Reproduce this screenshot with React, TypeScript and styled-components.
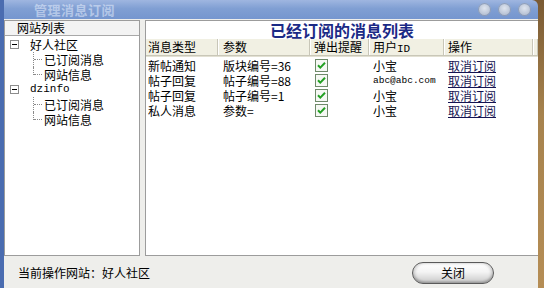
import React from "react";
import styled, { createGlobalStyle } from "styled-components";

const Global = createGlobalStyle`
  html, body { margin: 0; padding: 0; }
  body {
    width: 544px; height: 288px; overflow: hidden;
    background: linear-gradient(180deg, #7a5a33 0%, #a7834e 40%, #b58d55 100%);
    font-family: "Noto Sans CJK SC", "Noto Sans", sans-serif;
    font-size: 12px; color: #000;
  }
`;

const Window = styled.div`
  width: 538px; height: 288px;
  display: flex; flex-direction: column;
  overflow: hidden;
`;

const TitleBar = styled.div`
  height: 19px; flex: none;
  display: flex; align-items: center; justify-content: space-between;
  padding: 0 7px 0 34px;
  background: linear-gradient(180deg, #9fb6e0 0%, #809fd3 45%, #7596cf 100%);
  border-top-right-radius: 6px;
  border-left: 4px solid #4a6cb0;
  box-sizing: border-box;
`;

const TitleText = styled.span`
  font-weight: bold; font-size: 13px; letter-spacing: 0.5px;
  color: rgba(230, 238, 252, 0.55);
  margin-left: -4px;
`;

const TitleButtons = styled.div`
  display: flex; gap: 7px; align-items: center;
`;

const TitleButton = styled.span`
  width: 13px; height: 13px; border-radius: 50%;
  background: radial-gradient(circle at 50% 40%, #dfe5ef 0%, #b9c4d6 60%, #97a7c1 100%);
  box-shadow: inset 0 0 0 1px rgba(110, 130, 165, 0.6);
`;

const Body = styled.div`
  flex: 1; display: flex; flex-direction: column;
  background: #eeeeeb;
  border-left: 4px solid #4a6cb0;
`;

const Main = styled.div`
  display: flex; gap: 5px;
  padding-top: 1px;
  height: 236px;
`;

const LeftPanel = styled.div`
  width: 136px; box-sizing: border-box;
  background: #fff;
  border: 1px solid #9c9c9c;
  display: flex; flex-direction: column;
`;

const PanelHeader = styled.div`
  height: 14px; line-height: 14px;
  padding-left: 12px;
  background: #f3f3f3;
  border-bottom: 1px solid #a8a8a8;
`;

const Tree = styled.div`
  display: flex; flex-direction: column;
  padding-top: 1px;
`;

const TreeRow = styled.div<{ $indent?: number }>`
  height: 15px; line-height: 15px;
  display: flex; align-items: center;
  padding-left: ${(p) => p.$indent ?? 5}px;
  white-space: nowrap;
`;

const Toggle = styled.span`
  width: 9px; height: 9px; box-sizing: border-box;
  border: 1px solid #8c8c8c;
  background: #fff;
  display: inline-flex; align-items: center; justify-content: center;
  margin-right: 11px;
  &::after { content: ""; width: 5px; height: 1px; background: #000; }
`;

const Elbow = styled.span<{ $last?: boolean }>`
  position: relative;
  width: 10px; height: 15px; flex: none;
  margin-right: 1px;
  &::before {
    content: ""; position: absolute; left: 0; top: 0;
    height: ${(p) => (p.$last ? "8px" : "15px")};
    border-left: 1px dotted #8a8a8a;
  }
  &::after {
    content: ""; position: absolute; left: 1px; top: 7px;
    width: 8px; border-top: 1px dotted #8a8a8a;
  }
`;

const MonoText = styled.span`
  font-family: "Liberation Mono", "Noto Sans CJK SC", monospace;
  font-size: 11px;
`;

const RightPanel = styled.div`
  flex: 1; box-sizing: border-box;
  background: #fff;
  border: 1px solid #9c9c9c;
  border-right: none;
  display: flex; flex-direction: column;
`;

const Heading = styled.div`
  height: 18px; line-height: 18px;
  text-align: center;
  font-size: 16px; font-weight: bold;
  color: #1b2a86;
`;

const Table = styled.div`
  display: flex; flex-direction: column;
`;

const HeaderRow = styled.div`
  display: grid;
  grid-template-columns: 72px 92px 59px 75px 89px 1fr;
  height: 16px;
  background: #f1f0e3;
  border-bottom: 1px solid #c9c7b8;
  box-shadow: 0 1px 0 #e2e0d2;
  margin-bottom: 2px;
`;

const HeadCell = styled.div<{ $pad?: number }>`
  line-height: 16px;
  padding-left: ${(p) => p.$pad ?? 4}px;
  border-right: 1px solid #c8c6b8;
  box-shadow: 1px 0 0 #ffffff;
  white-space: nowrap; overflow: hidden;
`;

const Row = styled.div`
  display: grid;
  grid-template-columns: 72px 92px 59px 75px 89px 1fr;
  height: 15px;
`;

const Cell = styled.div<{ $pad?: number }>`
  line-height: 15px;
  padding-left: ${(p) => p.$pad ?? 4}px;
  white-space: nowrap; overflow: hidden;
  display: flex; align-items: center;
`;

const SmallMono = styled.span`
  font-family: "Liberation Mono", monospace;
  font-size: 9.5px;
`;

const Link = styled.a`
  color: #141452;
  text-decoration: underline;
  cursor: pointer;
`;

const Footer = styled.div`
  flex: 1;
  display: flex; align-items: center; justify-content: space-between;
  padding: 0 44px 0 14px;
`;

const Status = styled.span``;

const CloseButton = styled.button`
  width: 82px; height: 22px;
  border-radius: 11px;
  border: 1px solid #5a5a5a;
  background: linear-gradient(180deg, #ffffff 0%, #f4f4f4 45%, #dcdcdc 75%, #c8c8c8 100%);
  box-shadow: inset 0 -2px 2px rgba(0,0,0,0.12), inset 2px 0 3px rgba(0,0,0,0.15), inset -2px 0 3px rgba(0,0,0,0.15);
  font-family: "Noto Sans CJK SC", sans-serif;
  font-size: 12px; color: #000;
  padding: 0; margin-top: 1px;
`;

const Check = () => (
  <svg width="13" height="13" viewBox="0 0 13 13">
    <rect x="0.5" y="0.5" width="12" height="12" fill="#f6f8f4" stroke="#6f8a6a" />
    <path d="M3 6.2 L5.3 8.6 L10 3.8" fill="none" stroke="#22a022" strokeWidth="2" />
  </svg>
);

const rows = [
  { type: "新帖通知", param: "版块编号=36", user: "小宝", mono: false },
  { type: "帖子回复", param: "帖子编号=88", user: "abc@abc.com", mono: true },
  { type: "帖子回复", param: "帖子编号=1", user: "小宝", mono: false },
  { type: "私人消息", param: "参数=", user: "小宝", mono: false },
];

export default function App() {
  return (
    <>
      <Global />
      <Window>
        <TitleBar>
          <TitleText>管理消息订阅</TitleText>
          <TitleButtons>
            <TitleButton />
            <TitleButton />
            <TitleButton />
          </TitleButtons>
        </TitleBar>
        <Body>
          <Main>
            <LeftPanel>
              <PanelHeader>网站列表</PanelHeader>
              <Tree>
                <TreeRow><Toggle />好人社区</TreeRow>
                <TreeRow $indent={28}><Elbow />已订阅消息</TreeRow>
                <TreeRow $indent={28}><Elbow $last />网站信息</TreeRow>
                <TreeRow><Toggle /><MonoText>dzinfo</MonoText></TreeRow>
                <TreeRow $indent={28}><Elbow />已订阅消息</TreeRow>
                <TreeRow $indent={28}><Elbow $last />网站信息</TreeRow>
              </Tree>
            </LeftPanel>
            <RightPanel>
              <Heading>已经订阅的消息列表</Heading>
              <Table>
                <HeaderRow>
                  <HeadCell $pad={2}>消息类型</HeadCell>
                  <HeadCell $pad={5}>参数</HeadCell>
                  <HeadCell>弹出提醒</HeadCell>
                  <HeadCell>用户<MonoText>ID</MonoText></HeadCell>
                  <HeadCell>操作</HeadCell>
                  <HeadCell />
                </HeaderRow>
                {rows.map((r, i) => (
                  <Row key={i}>
                    <Cell $pad={2}>{r.type}</Cell>
                    <Cell $pad={5}>{r.param}</Cell>
                    <Cell $pad={5}><Check /></Cell>
                    <Cell>{r.mono ? <SmallMono>{r.user}</SmallMono> : r.user}</Cell>
                    <Cell><Link>取消订阅</Link></Cell>
                    <Cell />
                  </Row>
                ))}
              </Table>
            </RightPanel>
          </Main>
          <Footer>
            <Status>当前操作网站：好人社区</Status>
            <CloseButton>关闭</CloseButton>
          </Footer>
        </Body>
      </Window>
    </>
  );
}
